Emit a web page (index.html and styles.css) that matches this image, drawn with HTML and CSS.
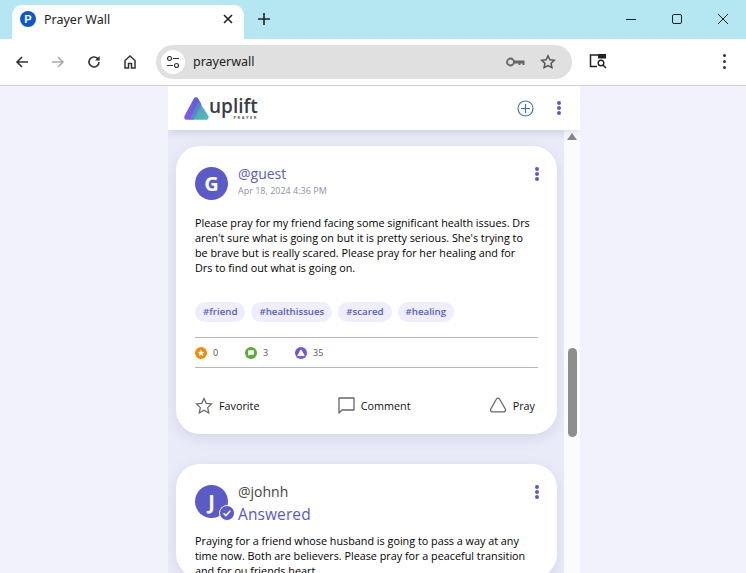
FILE: index.html
```html
<!DOCTYPE html>
<html lang="en">
  <head>
    <meta charset="UTF-8" />
    <meta name="viewport" content="width=device-width, initial-scale=1.0" />
    <title>Prayer Wall</title>
    <link rel="stylesheet" href="styles.css">
  </head>
  <body>
    <div class="tabstrip">
      <div class="tab">
        <span class="tab-favicon">P</span>
        <span class="tab-title">Prayer Wall</span>
        <svg class="tab-close" width="10" height="10" viewBox="0 0 10 10"><path d="M1 1l8 8M9 1l-8 8" stroke="#222" stroke-width="1.6" fill="none"/></svg>
      </div>
      <svg class="new-tab" width="12" height="12" viewBox="0 0 12 12"><path d="M6 0v12M0 6h12" stroke="#222" stroke-width="1.6" fill="none"/></svg>
      <div class="window-controls">
        <svg width="12" height="12" viewBox="0 0 12 12"><path d="M1 6.5h10" stroke="#222" fill="none"/></svg>
        <svg width="12" height="12" viewBox="0 0 12 12"><rect x="1.5" y="1.5" width="9" height="9" rx="1.5" stroke="#222" fill="none"/></svg>
        <svg width="12" height="12" viewBox="0 0 12 12"><path d="M1 1l10 10M11 1L1 11" stroke="#222" fill="none"/></svg>
      </div>
    </div>

    <div class="toolbar">
      <svg class="nav-icon" width="16" height="16" viewBox="0 0 16 16"><path d="M14 8H3M8 3L3 8l5 5" stroke="#333" stroke-width="1.6" fill="none"/></svg>
      <svg class="nav-icon" width="16" height="16" viewBox="0 0 16 16"><path d="M2 8h11M8 3l5 5-5 5" stroke="#aaa" stroke-width="1.6" fill="none"/></svg>
      <svg class="nav-icon" width="16" height="16" viewBox="0 0 16 16"><path d="M13 8a5 5 0 1 1-1.5-3.6L13 6" stroke="#333" stroke-width="1.6" fill="none"/><path d="M13.6 2v4.6H9z" fill="#333"/></svg>
      <svg class="nav-icon" width="16" height="16" viewBox="0 0 16 16"><path d="M3 14V6.500L8 2l5 4.500V14h-3.500V9.500h-3V14z" stroke="#333" stroke-width="1.500" fill="none"/></svg>
      <div class="omnibox">
        <span class="site-info">
          <svg width="14" height="12" viewBox="0 0 14 12"><circle cx="3.500" cy="2.500" r="2" stroke="#333" stroke-width="1.200" fill="none"/><path d="M7 2.500h6M1 9.500h6" stroke="#333" stroke-width="1.200"/><circle cx="10.500" cy="9.500" r="2" stroke="#333" stroke-width="1.200" fill="none"/></svg>
        </span>
        <span class="url">prayerwall</span>
        <svg class="key-icon" width="19" height="10" viewBox="0 0 19 10"><circle cx="4.500" cy="5" r="3.500" stroke="#666" stroke-width="1.800" fill="none"/><path d="M8 3.500h10.500V8h-2V6.500h-2V8h-2V6.500H8z" fill="#666"/></svg>
        <svg class="star-icon" width="16" height="16" viewBox="0 0 16 16"><path d="M8 1.800l1.900 4 4.400.5-3.200 3 .8 4.400L8 11.600l-3.900 2.100.8-4.400-3.200-3 4.400-.5z" stroke="#555" stroke-width="1.500" fill="none"/></svg>
      </div>
      <svg class="lens-icon" width="18" height="15" viewBox="0 0 18 15"><path d="M9 1H1.500v11.500H8" stroke="#222" stroke-width="1.500" fill="none"/><rect x="9" y="0" width="8" height="4.500" fill="#222"/><circle cx="12" cy="9" r="2.800" stroke="#222" stroke-width="1.400" fill="none"/><path d="M14 11l3 3" stroke="#222" stroke-width="1.500"/></svg>
      <span class="chrome-menu"><i></i><i></i><i></i></span>
    </div>

    <div class="page">
      <div class="app">
        <header class="app-header">
          <div class="logo">
            <svg width="25" height="23" viewBox="0 0 25 23">
              <defs>
                <linearGradient id="logo-left" x1="0" y1="1" x2="1" y2="0"><stop offset="0" stop-color="#8b56ee"/><stop offset="1" stop-color="#5a60cc"/></linearGradient>
                <linearGradient id="logo-right" x1="0" y1="0" x2="1" y2="1"><stop offset="0" stop-color="#5f74c8"/><stop offset="1" stop-color="#2fc0a8"/></linearGradient>
              </defs>
              <path d="M9.800 1.600c1-1.800 3.300-1.800 4.300 0l3.400 5.900L9.500 22.800H3c-2.300 0-3.500-2.200-2.400-4.100z" fill="url(#logo-left)"/>
              <path d="M13.300 6.500c.8-1.300 2.100-1.300 2.900 0l8.100 12.200c1 1.900-.1 4.100-2.300 4.100H9.500c-2 0-3-2-2-3.700z" fill="url(#logo-right)" opacity=".9"/>
            </svg>
            <div class="logo-text">
              <span class="logo-name">uplift</span>
              <span class="logo-sub">PRAYER</span>
            </div>
          </div>
          <div class="header-actions">
            <svg width="17" height="17" viewBox="0 0 17 17"><circle cx="8.500" cy="8.500" r="7.500" stroke="#4a7ab5" stroke-width="1.200" fill="none"/><path d="M8.500 4v9M4 8.500h9" stroke="#4a6fa8" stroke-width="1.200"/></svg>
            <span class="dots"><i></i><i></i><i></i></span>
          </div>
        </header>

        <div class="feed-wrap">
          <main class="feed">
            <article class="card">
              <div class="card-head">
                <div class="avatar">G</div>
                <div class="card-meta">
                  <div class="handle">@guest</div>
                  <div class="date">Apr 18, 2024 4:36 PM</div>
                </div>
                <span class="dots"><i></i><i></i><i></i></span>
              </div>
              <p class="card-text">Please pray for my friend facing some significant health issues. Drs aren't sure what is going on but it is pretty serious. She's trying to be brave but is really scared. Please pray for her healing and for Drs to find out what is going on.</p>
              <div class="tags">
                <span class="tag">#friend</span>
                <span class="tag">#healthissues</span>
                <span class="tag">#scared</span>
                <span class="tag">#healing</span>
              </div>
              <div class="stats">
                <span class="stat">
                  <svg width="12" height="12" viewBox="0 0 12 12"><circle cx="6" cy="6" r="6" fill="#f58a0b"/><path d="M6 2.600l1 2.100 2.300.3-1.700 1.600.5 2.300L6 7.800 3.900 8.900l.5-2.300L2.700 5l2.300-.3z" fill="#fff"/></svg>
                  0
                </span>
                <span class="stat">
                  <svg width="12" height="12" viewBox="0 0 12 12"><circle cx="6" cy="6" r="6" fill="#5fa83a"/><path d="M3.200 3.200h5.600v4.600H4.400L3.200 9z" fill="#fff"/></svg>
                  3
                </span>
                <span class="stat">
                  <svg width="12" height="12" viewBox="0 0 12 12"><circle cx="6" cy="6" r="6" fill="#6f55e0"/><path d="M6 2.800L9.200 8.600H2.800z" fill="#fff" stroke="#fff" stroke-linejoin="round"/></svg>
                  35
                </span>
              </div>
              <div class="actions">
                <span class="action">
                  <svg width="18" height="17" viewBox="0 0 19 18"><path d="M9.500 1.500l2.400 5.200 5.600.7-4.100 3.900 1.100 5.600-5-2.800-5 2.800 1.100-5.600L1.500 7.400l5.600-.7z" stroke="#666" stroke-width="1.300" fill="none"/></svg>
                  Favorite
                </span>
                <span class="action">
                  <svg width="17" height="17" viewBox="0 0 17 17"><path d="M1 1h15v12H4l-3 3z" stroke="#666" stroke-width="1.300" fill="none" stroke-linejoin="round"/></svg>
                  Comment
                </span>
                <span class="action">
                  <svg width="18" height="16" viewBox="0 0 18 16"><path d="M7.500 2c.7-1.100 2.300-1.100 3 0l5.800 10c.7 1.300-.1 2.800-1.500 2.800H3.200c-1.400 0-2.200-1.500-1.500-2.800z" stroke="#666" stroke-width="1.300" fill="none"/></svg>
                  Pray
                </span>
              </div>
            </article>

            <article class="card">
              <div class="card-head">
                <div class="avatar">
                  J
                  <svg class="answered-badge" width="16" height="16" viewBox="0 0 16 16"><circle cx="8" cy="8" r="7.500" fill="#5a5bc9" stroke="#fff"/><path d="M4.500 8.200l2.400 2.400 4.400-4.800" stroke="#fff" stroke-width="1.500" fill="none"/></svg>
                </div>
                <div class="card-meta">
                  <div class="handle handle-answered">@johnh</div>
                  <div class="answered">Answered</div>
                </div>
                <span class="dots"><i></i><i></i><i></i></span>
              </div>
              <p class="card-text">Praying for a friend whose husband is going to pass a way at any time now. Both are believers. Please pray for a peaceful transition and for ou friends heart.</p>
            </article>
          </main>
          <div class="scrollbar">
            <span class="scroll-arrow"></span>
            <span class="scroll-thumb"></span>
          </div>
        </div>
      </div>
    </div>
  </body>
</html>
```

FILE: styles.css
```css
*,
*::before,
*::after {
  box-sizing: border-box;
}
* {
  margin: 0;
}
html,
body {
  height: 573px;
  overflow: hidden;
}
body {
  display: flex;
  flex-direction: column;
  font-family: "Open Sans", sans-serif;
  background-color: #f2f2fc;
  color: #111;
}

/* browser chrome */
.tabstrip {
  display: flex;
  align-items: flex-end;
  flex: 0 0 39px;
  padding-left: 12px;
  background-color: #b5e7f3;
}
.tab {
  display: flex;
  align-items: center;
  width: 232px;
  height: 34px;
  padding: 0 11px 6px 8px;
  background-color: #fff;
  border-radius: 10px 10px 0 0;
}
.tab-favicon {
  display: flex;
  align-items: center;
  justify-content: center;
  width: 16px;
  height: 16px;
  border-radius: 50%;
  background-color: #0b57d0;
  color: #fff;
  font: bold 11px "Liberation Sans", sans-serif;
}
.tab-title {
  flex: 1;
  margin-left: 8px;
  font: 12.5px "Noto Sans", sans-serif;
  color: #222;
}
.new-tab {
  margin: 0 0 14px 14px;
}
.window-controls {
  display: flex;
  gap: 34px;
  margin: 0 17px 14px auto;
}

.toolbar {
  display: flex;
  align-items: center;
  flex: 0 0 47px;
  padding: 0 0 1px 14px;
  background-color: #fff;
  border-bottom: 1px solid #d0d0d0;
}
.nav-icon {
  margin-right: 20px;
}
.omnibox {
  display: flex;
  align-items: center;
  width: 416px;
  height: 34px;
  margin-left: -2px;
  padding: 0 16px 0 5px;
  border-radius: 17px;
  background-color: #e0e0e0;
}
.site-info {
  display: flex;
  align-items: center;
  justify-content: center;
  width: 24px;
  height: 24px;
  border-radius: 50%;
  background-color: #fff;
}
.url {
  flex: 1;
  margin-left: 8px;
  font: 12.5px "Noto Sans", sans-serif;
  color: #222;
}
.key-icon {
  margin-right: 15px;
}
.lens-icon {
  margin-left: 17px;
}
.chrome-menu {
  display: flex;
  flex-direction: column;
  gap: 3px;
  margin-left: auto;
  margin-right: 20px;
}
.chrome-menu i {
  width: 3px;
  height: 3px;
  border-radius: 50%;
  background-color: #333;
}

/* app */
.page {
  display: flex;
  justify-content: center;
  flex: 1;
  min-height: 0;
  padding-left: 2px;
}
.app {
  display: flex;
  flex-direction: column;
  width: 412px;
  overflow: hidden;
  background-color: #fff;
}
.app-header {
  position: relative;
  display: flex;
  align-items: center;
  justify-content: space-between;
  flex: 0 0 44px;
  padding: 0 19px 0 16px;
  background-color: #fff;
  box-shadow: 0 2px 8px rgba(90, 90, 140, 0.2);
}
.logo {
  display: flex;
  align-items: center;
}
.logo-text {
  display: flex;
  flex-direction: column;
  align-items: flex-end;
  margin-top: 2px;
}
.logo-name {
  font: 600 19px/15px "Open Sans", sans-serif;
  color: #3c3c46;
}
.logo-sub {
  margin-top: 1px;
  font: bold 4px/5px "Open Sans", sans-serif;
  letter-spacing: 1.5px;
  color: #555;
}
.header-actions {
  display: flex;
  align-items: center;
  gap: 23px;
}
.dots {
  display: flex;
  flex-direction: column;
  gap: 1px;
}
.dots i {
  width: 4px;
  height: 4px;
  border-radius: 50%;
  background-color: #5a5bc9;
}

.feed-wrap {
  display: flex;
  flex: 1;
  min-height: 0;
}
.feed {
  flex: 1;
  padding: 16px 7px 0 8px;
  background-color: #e9ebf8;
}
.card {
  margin-bottom: 30px;
  padding: 20px 19px 0;
  background-color: #fff;
  border-radius: 24px;
  box-shadow: 0 4px 14px rgba(90, 90, 150, 0.14);
}
.card-head {
  display: flex;
  align-items: flex-start;
  height: 49px;
}
.avatar {
  position: relative;
  display: flex;
  align-items: center;
  justify-content: center;
  width: 33px;
  height: 33px;
  margin-top: 1px;
  border-radius: 50%;
  background-color: #5a5bc9;
  color: #fff;
  font-size: 20px;
  font-weight: 700;
}
.answered-badge {
  position: absolute;
  right: -7px;
  bottom: -3px;
}
.card-meta {
  flex: 1;
  margin-left: 10px;
}
.handle {
  margin-top: -1px;
  font-size: 14px;
  line-height: 18px;
  font-weight: 500;
  color: #5a5bc9;
}
.handle-answered {
  color: #444;
}
.date {
  margin-top: 1px;
  font-size: 9px;
  line-height: 14px;
  color: #8c93a8;
}
.answered {
  margin-top: 1px;
  font-size: 15.500px;
  line-height: 24px;
  font-weight: 500;
  letter-spacing: 0.1px;
  color: #5a5bc9;
}
.card .dots {
  margin: 1px -1px 0 0;
}
.card-text {
  padding-right: 6px;
  font-size: 10.800px;
  line-height: 15px;
  color: #000;
}
.tags {
  display: flex;
  gap: 6px;
  margin-top: 27px;
}
.tag {
  padding: 0 8px;
  font-size: 9.700px;
  line-height: 20px;
  font-weight: 600;
  color: #5a5bc9;
  background-color: #eeeefd;
  border-radius: 10px;
}
.stats {
  display: flex;
  gap: 26px;
  height: 31px;
  align-items: center;
  margin-top: 15px;
  border-top: 1px solid #b4b8c4;
  border-bottom: 1px solid #b4b8c4;
}
.stat {
  display: flex;
  align-items: center;
  gap: 6px;
  width: 24px;
  font-size: 9px;
  color: #555;
}
.stat svg {
  flex-shrink: 0;
}
.actions {
  display: flex;
  justify-content: space-between;
  align-items: center;
  height: 66px;
  padding: 8px 3px 0 0;
}
.action {
  display: flex;
  align-items: center;
  gap: 6px;
  font-size: 10.800px;
  color: #111;
}

.scrollbar {
  display: flex;
  flex-direction: column;
  align-items: center;
  flex: 0 0 16px;
  padding-top: 3px;
  background-color: #fbfbfd;
}
.scroll-arrow {
  width: 0;
  height: 0;
  border-left: 5px solid transparent;
  border-right: 5px solid transparent;
  border-bottom: 7px solid #888;
}
.scroll-thumb {
  width: 9px;
  height: 89px;
  margin-top: 208px;
  border-radius: 5px;
  background-color: #8e8e8e;
}
```
